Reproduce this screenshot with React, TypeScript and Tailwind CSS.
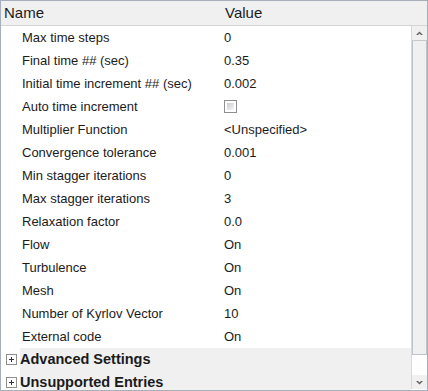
import React from 'react';

const rows: [string, string][] = [
  ['Max time steps', '0'],
  ['Final time ## (sec)', '0.35'],
  ['Initial time increment ## (sec)', '0.002'],
  ['Auto time increment', '__check'],
  ['Multiplier Function', '<Unspecified>'],
  ['Convergence tolerance', '0.001'],
  ['Min stagger iterations', '0'],
  ['Max stagger iterations', '3'],
  ['Relaxation factor', '0.0'],
  ['Flow', 'On'],
  ['Turbulence', 'On'],
  ['Mesh', 'On'],
  ['Number of Kyrlov Vector', '10'],
  ['External code', 'On'],
];

const groups = ['Advanced Settings', 'Unsupported Entries'];

function PlusBox() {
  return (
    <svg width="11" height="11" viewBox="0 0 11 11" className="shrink-0">
      <rect x="0.5" y="0.5" width="10" height="10" fill="#fff" stroke="#8e8f8f" />
      <path d="M3 5.5h5M5.5 3v5" stroke="#333" strokeWidth="1" />
    </svg>
  );
}

function Arrow({ up }: { up?: boolean }) {
  return (
    <svg width="7" height="5" viewBox="0 0 7 5">
      <path d={up ? 'M0 4L3.5 0.5L7 4H5L3.5 2.5L2 4Z' : 'M0 1L3.5 4.5L7 1H5L3.5 2.5L2 1Z'} fill="#606060" />
    </svg>
  );
}

export default function App() {
  return (
    <div
      className="w-[428px] h-[391px] overflow-hidden bg-white border border-[#a5b0bc] flex flex-col text-[#1b1b1b]"
      style={{ fontFamily: '"Liberation Sans", Arial, sans-serif' }}
    >
      {/* header */}
      <div className="h-[25px] shrink-0 flex items-center bg-[#f0f0f0] border-b border-[#d5d5d5] text-[15px]">
        <div className="w-[221px] pl-[3px]">Name</div>
        <div className="pl-[3px]">Value</div>
      </div>

      <div className="flex flex-1 min-h-0">
        {/* rows */}
        <div className="flex-1 flex flex-col text-[13px]">
          {rows.map(([name, value]) => (
            <div key={name} className="h-[23px] shrink-0 flex items-center">
              <div className="w-[221px] pl-[21px]">{name}</div>
              <div className="pl-[2px] flex items-center">
                {value === '__check' ? (
                  <div className="w-[13px] h-[13px] border border-[#8f8f8f] bg-white p-[2px]">
                    <div className="w-full h-full bg-gradient-to-br from-[#c9cbcf] to-[#f7f7f7]" />
                  </div>
                ) : (
                  value
                )}
              </div>
            </div>
          ))}
          {groups.map((g) => (
            <div key={g} className="h-[23px] shrink-0 flex items-center">
              <div className="w-[19px] h-full flex items-center justify-center pl-[1px]">
                <PlusBox />
              </div>
              <div className="flex-1 h-full bg-[#f0f0f0] flex items-center text-[14.5px] font-bold">{g}</div>
            </div>
          ))}
        </div>

        {/* scrollbar */}
        <div className="w-[16px] shrink-0 flex flex-col bg-[#f0f0f0] border-l border-[#d9d9d9] mb-[1px]">
          <div className="h-[15px] flex items-center justify-center border-b border-[#c8c8c8]">
            <Arrow up />
          </div>
          <div className="h-[314px] bg-[#f0f0f0] border-x border-b border-[#bcc3cb]" />
          <div className="flex-1 bg-white" />
          <div className="h-[14px] flex items-center justify-center">
            <Arrow />
          </div>
        </div>
      </div>
    </div>
  );
}
